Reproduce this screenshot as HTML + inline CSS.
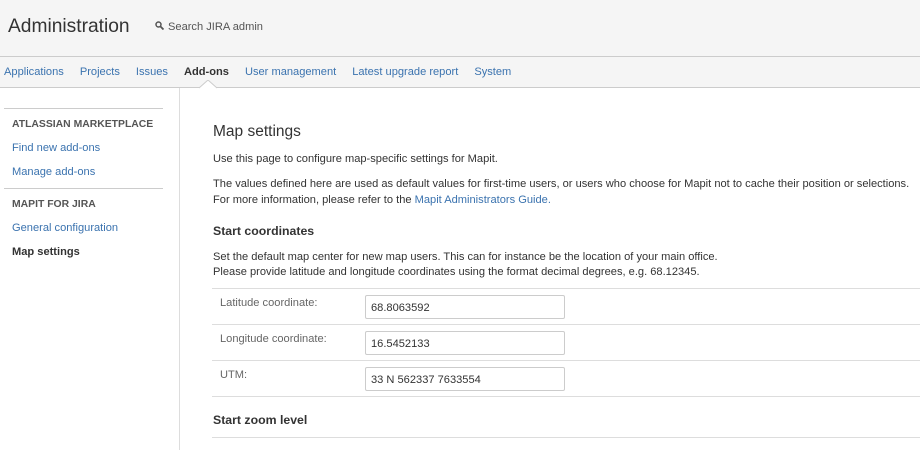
<!DOCTYPE html><html><head><style>
body{margin:0;width:920px;height:450px;overflow:hidden;font-family:"Liberation Sans",sans-serif;font-size:11.1px;color:#333;background:#fff;position:relative}
.a{position:absolute;white-space:nowrap}
a,.l{color:#3b73af;text-decoration:none}
.hr{position:absolute;height:1px;background:#ccc}
.inp{position:absolute;left:365px;height:24px;border:1px solid #ccc;border-radius:2px;box-sizing:border-box;width:200px;padding:6px 5px;font-size:11.1px;line-height:12px;color:#333}
</style></head><body>
<div class="a" style="left:0;top:0;width:920px;height:56px;background:#f5f5f5;border-bottom:1px solid #ccc"></div>
<div class="a" style="left:8px;top:16px;font-size:19.2px;color:#333">Administration</div>
<div class="a" style="left:155px;top:21px;color:#555"><svg width="9" height="9" viewBox="0 0 9 9" style="margin-right:4px"><circle cx="3.5" cy="3.5" r="2.5" fill="none" stroke="#555" stroke-width="1.5"/><path d="M5.5 5.5L8.5 8.5" stroke="#555" stroke-width="1.8"/></svg>Search JIRA admin</div>
<div class="a" style="left:0;top:57px;width:920px;height:30px;background:#f5f5f5;border-bottom:1px solid #ccc"></div>
<div class="a" style="left:4px;top:66px"><span class="l">Applications</span><span class="l" style="margin-left:16px">Projects</span><span class="l" style="margin-left:16px">Issues</span><b style="margin-left:16px;color:#333">Add-ons</b><span class="l" style="margin-left:16px">User management</span><span class="l" style="margin-left:16px">Latest upgrade report</span><span class="l" style="margin-left:16px">System</span></div>
<svg class="a" style="left:199px;top:80px" width="18" height="9"><path d="M0 8L9 0L18 8" fill="#fff" stroke="#ccc"/></svg>
<div class="a" style="left:179px;top:88px;width:1px;height:362px;background:#ddd"></div>
<div class="hr" style="left:4px;width:159px;top:108px"></div>
<div class="hr" style="left:4px;width:159px;top:188px"></div>
<div class="a" style="left:12px;top:119px;font-size:10.4px;font-weight:bold;color:#555">ATLASSIAN MARKETPLACE</div>
<div class="a l" style="left:12px;top:142px">Find new add-ons</div>
<div class="a l" style="left:12px;top:166px">Manage add-ons</div>
<div class="a" style="left:12px;top:199px;font-size:10.4px;font-weight:bold;color:#555">MAPIT FOR JIRA</div>
<div class="a l" style="left:12px;top:222px">General configuration</div>
<div class="a" style="left:12px;top:246px;font-weight:bold;color:#333">Map settings</div>
<div class="a" style="left:213px;top:123px;font-size:15.5px">Map settings</div>
<div class="a" style="left:213px;top:153px">Use this page to configure map-specific settings for Mapit.</div>
<div class="a" style="left:213px;top:178px">The values defined here are used as default values for first-time users, or users who choose for Mapit not to cache their position or selections.</div>
<div class="a" style="left:213px;top:194px">For more information, please refer to the <span class="l">Mapit Administrators Guide.</span></div>
<div class="a" style="left:213px;top:224px;font-size:12.3px;font-weight:bold">Start coordinates</div>
<div class="a" style="left:213px;top:251px">Set the default map center for new map users. This can for instance be the location of your main office.</div>
<div class="a" style="left:213px;top:266px">Please provide latitude and longitude coordinates using the format decimal degrees, e.g. 68.12345.</div>
<div class="hr" style="left:212px;width:708px;top:288px;background:#ddd"></div>
<div class="hr" style="left:212px;width:708px;top:324px;background:#ddd"></div>
<div class="hr" style="left:212px;width:708px;top:360px;background:#ddd"></div>
<div class="hr" style="left:212px;width:708px;top:396px;background:#ddd"></div>
<div class="hr" style="left:212px;width:708px;top:437px;background:#ddd"></div>
<div class="a" style="left:220px;top:297px;color:#666">Latitude coordinate:</div>
<div class="a" style="left:220px;top:333px;color:#666">Longitude coordinate:</div>
<div class="a" style="left:220px;top:369px;color:#666">UTM:</div>
<div class="inp" style="top:295px">68.8063592</div>
<div class="inp" style="top:331px">16.5452133</div>
<div class="inp" style="top:367px">33 N 562337 7633554</div>
<div class="a" style="left:213px;top:413px;font-size:12.3px;font-weight:bold">Start zoom level</div>
</body></html>
